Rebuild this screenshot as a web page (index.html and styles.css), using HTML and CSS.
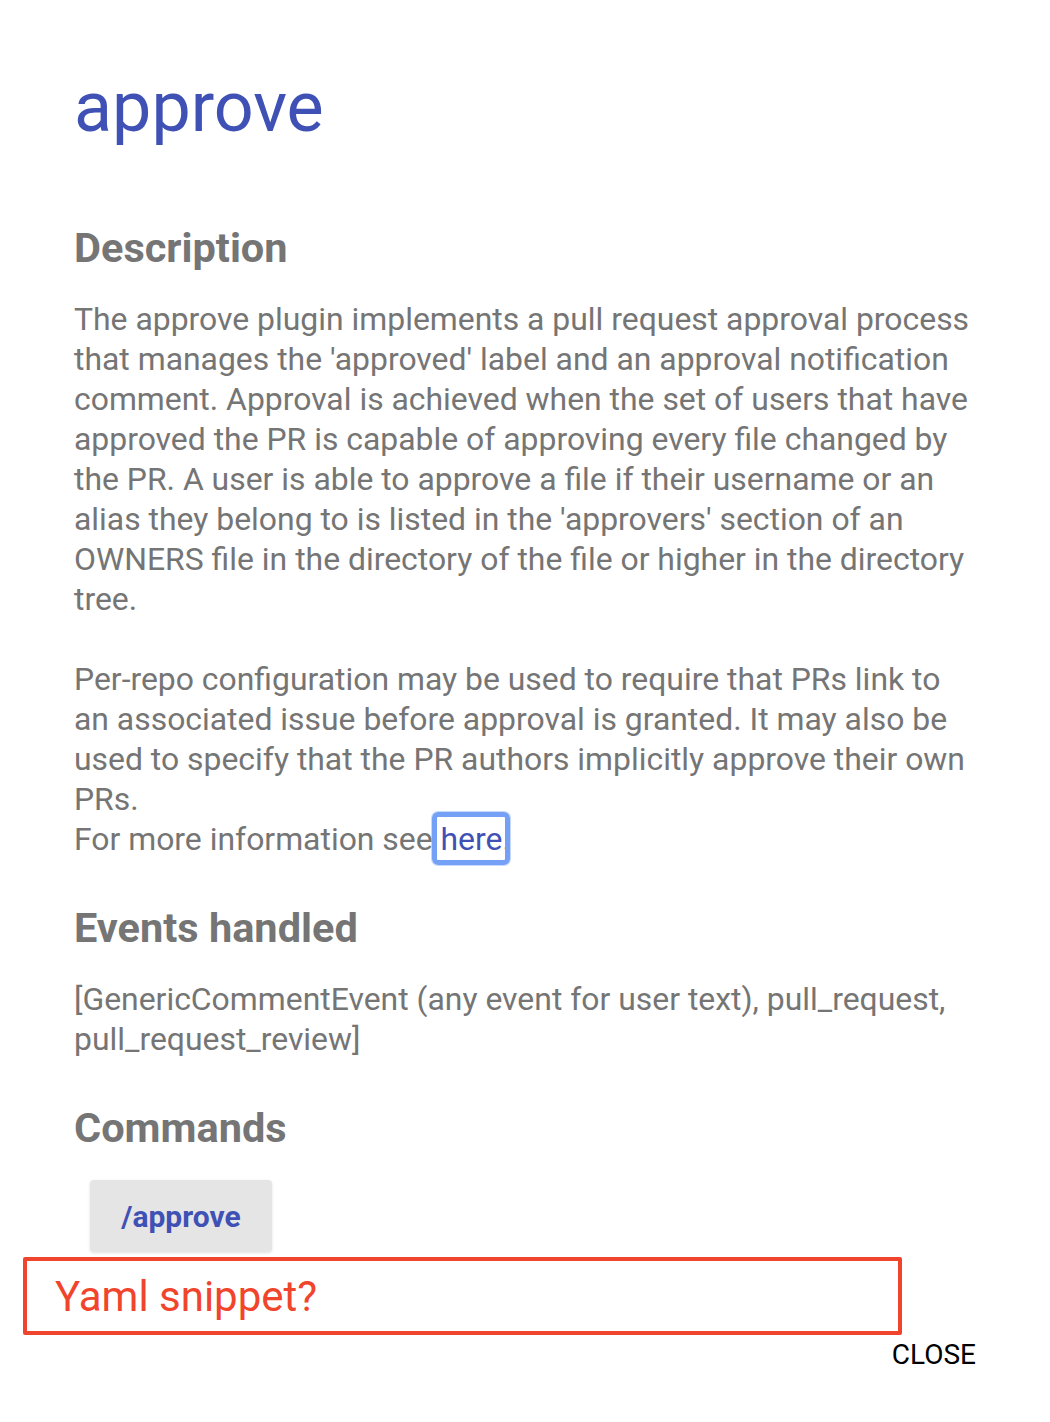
FILE: index.html
```html
<!DOCTYPE html>
<html lang="en">
<head>
<meta charset="utf-8">
<title>approve</title>
<link rel="stylesheet" href="styles.css">
</head>
<body>
<div class="dialog">
  <h1 class="title">approve</h1>
  <section class="section">
    <h2 class="heading first">Description</h2>
    <p class="text">The approve plugin implements a pull request approval process that manages the 'approved' label and an approval notification comment. Approval is achieved when the set of users that have approved the PR is capable of approving every file changed by the PR. A user is able to approve a file if their username or an alias they belong to is listed in the 'approvers' section of an OWNERS file in the directory of the file or higher in the directory tree.</p>
    <p class="text gap">Per-repo configuration may be used to require that PRs link to an associated issue before approval is granted. It may also be used to specify that the PR authors implicitly approve their own PRs.<br>For more information see <a class="link" href="#">here</a>.</p>
  </section>
  <section class="section">
    <h2 class="heading">Events handled</h2>
    <p class="text">[GenericCommentEvent (any event for user text), pull_request, pull_request_review]</p>
  </section>
  <section class="section">
    <h2 class="heading">Commands</h2>
    <div class="commands">
      <button class="command">/approve</button>
    </div>
  </section>
  <div class="snippet">Yaml snippet?</div>
  <div class="actions">
    <button class="close">CLOSE</button>
  </div>
</div>
</body>
</html>
```

FILE: styles.css
```css
html, body {
  margin: 0;
  padding: 0;
  background: #ffffff;
}

body {
  font-family: Roboto, "Liberation Sans", sans-serif;
}

.dialog {
  width: 900px;
  padding: 59px 0 0 74px;
}

.title {
  margin: 0;
  font-size: 70px;
  font-weight: 400;
  line-height: 96px;
  color: #3f51b5;
}

.heading {
  margin: 45px 0 0 0;
  font-size: 41.5px;
  font-weight: 700;
  line-height: 48px;
  color: #757575;
}

.heading.first {
  margin-top: 69px;
}

.text {
  margin: 27px 0 0 0;
  font-size: 31.9px;
  line-height: 40px;
  color: #757575;
}

.text.gap {
  margin-top: 40px;
}

.link {
  position: relative;
  color: #3f51b5;
  text-decoration: none;
}

.link::after {
  content: "";
  position: absolute;
  left: -9px;
  right: -8px;
  top: -8px;
  bottom: -7px;
  border: 5px solid #74a1f6;
  border-radius: 6px;
  box-shadow: 0 0 0 1px rgba(116, 161, 246, 0.4);
}

.commands {
  margin-top: 28px;
  padding-left: 16px;
}

.command {
  width: 182px;
  height: 72px;
  border: none;
  border-radius: 4px;
  background: #e5e5e5;
  box-shadow: 0 1px 3px rgba(0, 0, 0, 0.12);
  font-family: Roboto, "Liberation Sans", sans-serif;
  font-size: 30px;
  font-weight: 700;
  color: #3f51b5;
  padding: 0;
}

.snippet {
  margin: 5px 0 0 -51px;
  width: 843px;
  height: 68px;
  border: 4px solid #f0452c;
  border-radius: 2px;
  padding: 2px 0 0 28px;
  font-size: 42px;
  line-height: 67px;
  color: #f0452c;
}

.actions {
  display: flex;
  justify-content: flex-end;
  width: 902px;
}

.close {
  border: none;
  background: transparent;
  padding: 0;
  margin-top: 4px;
  font-family: Roboto, "Liberation Sans", sans-serif;
  font-size: 28px;
  line-height: 32px;
  color: #000000;
}
```
